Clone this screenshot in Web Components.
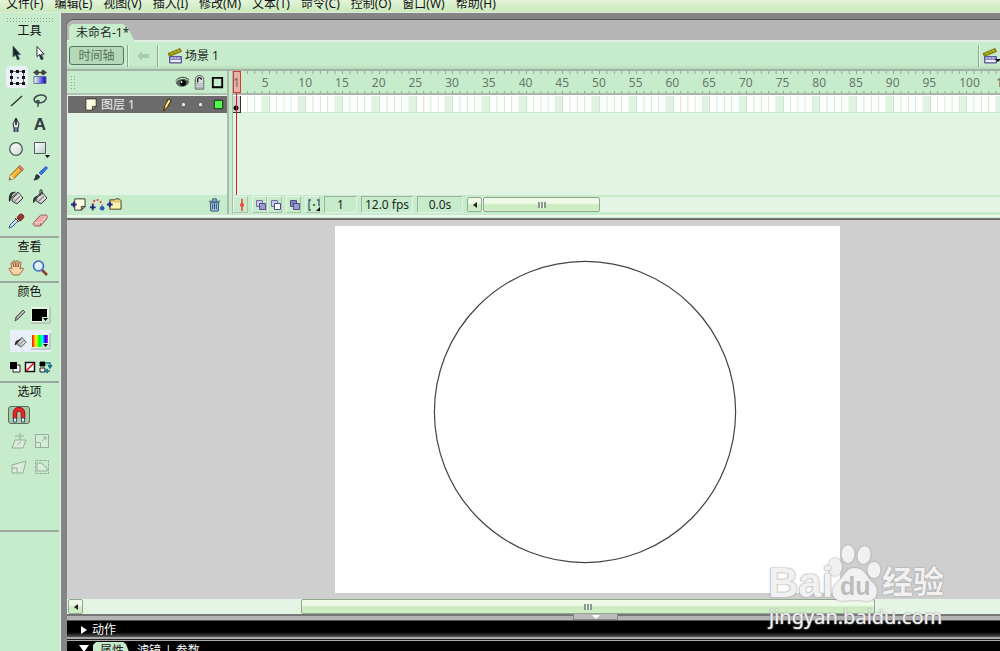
<!DOCTYPE html>
<html lang="zh-CN">
<head>
<meta charset="utf-8">
<title>未命名-1</title>
<style>
html,body{margin:0;height:100%;overflow:hidden}
body{font:12px/18px "Noto Sans","Noto Sans CJK SC",sans-serif;color:#1c281e;
--green:#c7eccb;--pale:#e2f4e4;--line:#a4b8a7;background:#858585}
</style>
</head>
<body>
<flash-app></flash-app>
<script>
const define=(name,css,html)=>customElements.define(name,class extends HTMLElement{
  connectedCallback(){
    if(this.shadowRoot)return;
    const body=typeof html==='function'?html(this):html;
    this.attachShadow({mode:'open'}).innerHTML=`<style>*{box-sizing:border-box}button{font:inherit;color:inherit;background:none;border:0;padding:0;margin:0}${css}</style>${body}`;
  }
});

const fold='<path d="M2 2h11v8l-4 4H2z" fill="#fffde2" stroke="#333"/><path d="M9 14v-4h4z" fill="#b5ae68" stroke="#333"/>';
const plus='<path d="M0 8h6M3 5v6" stroke="#24247c" stroke-width="2"/>';
const clap='<path d="M1 5.500 13 .5l1.500 3-12 5z" fill="#9c9410" stroke="#6b6708" stroke-width=".8"/><path d="m4 4.500 2 2m1-4 2 2m1-3 2 2" stroke="#d8d45a"/><path d="M2.500 8.500h12v6.500h-12z" fill="#8c88c8" stroke="#5b5798"/><path d="M4 10h9" stroke="#dcdcf8" stroke-dasharray="2 1"/><path d="M3.500 12h10v2h-10z" fill="#eef"/>';
const bucket='<path d="m4 8 6-5 5 6-6 6-5-3z" fill="#bbb" stroke="#444"/><path d="m6 9 5-4 3 4-5 4z" fill="#e4e4e4"/><path d="m7 12 5-5" stroke="#888" stroke-width="1.500"/><path d="M5 9 9 5" stroke="#555"/>';
const sq=(x,y,f,s)=>`<path d="M${x}.5 ${y}.5h6v6h-6z" fill="${f}" stroke="${s}"/>`;
const icons={
 arrow:'<path d="M5 1v11l2.500-2 2 5 2-1-2-4.500h3z" fill="#18242e" stroke="#4d6060" stroke-width=".8"/>',
 subarrow:'<path d="M5 1.500v10l2.500-2 2 5 1.700-.8-2-4.500h3z" fill="#fff" stroke="#27333c"/><path d="m8 10 2 4.500" stroke="#27333c" stroke-width="2"/>',
 transform:'<path d="M2.500 2.500h12v12h-12z" fill="none" stroke="#666"/><g fill="#111"><path d="M1 1h3v3H1zm12 0h3v3h-3zM1 13h3v3H1zm12 0h3v3h-3zM7 1h3v3H7zm0 12h3v3H7zM1 7h3v3H1zm12 0h3v3h-3zM8 8h1.500v1.500H8z"/></g>',
 gradient:'<defs><linearGradient id="g"><stop stop-color="#fff"/><stop offset="1" stop-color="#0000b8"/></linearGradient></defs><path d="M2 7.500h12v7H2z" fill="url(#g)" stroke="#6470a0"/><path d="M2 3.500h12" stroke="#444"/><path d="m1 3.500 4-3v6zM15 3.500l-4-3v6zM8 3.500l-3-3v6zM8 3.500l3-3v6z" fill="#444"/>',
 line:'<path d="M3 13 14 3" stroke="#333" stroke-width="1.400"/>',
 lasso:'<path d="M6 10C1 9 1 5 5 3c4-2 10-1 9 3-1 3-6 5-9 3-1-1 1-2 2-1 1 2-2 3-1 6" fill="none" stroke="#3e4a50" stroke-width="1.500"/>',
 pen:'<path d="M8 1 5 7l1 4h4l1-4z" fill="#dfe8f2" stroke="#222"/><path d="M8 2v6" stroke="#111" stroke-width="1.500"/><path d="M5.500 11h5v4h-5z" fill="#3b3f69"/><path d="M8 11v4" stroke="#bbd"/>',
 oval:'<defs><linearGradient id="o" x2="1" y2="1"><stop stop-color="#fff"/><stop offset="1" stop-color="#cbdcd5"/></linearGradient></defs><circle cx="8" cy="8" r="6.300" fill="url(#o)" stroke="#555d60" stroke-width="1.300"/>',
 rect:'<defs><linearGradient id="r" x2="1" y2="1"><stop stop-color="#fff"/><stop offset="1" stop-color="#bad1c9"/></linearGradient></defs><path d="M2.500 1.500h11v11h-11z" fill="url(#r)" stroke="#555d60"/><path d="M13 14h5l-2.500 3z" fill="#000"/>',
 pencil:'<path d="m1 15 1.500-5 8-8 3.500 3.500-8 8z" fill="#f6ac24" stroke="#8b5b16"/><path d="m1 15 1.500-5L6 13.500z" fill="#f6e0b8"/><path d="m1 15 1-2 1 1z" fill="#222"/><path d="m4 11 7-7" stroke="#ffe08e"/><path d="m10 2 2-1.500L15.500 4 14 6z" fill="#f07a6a" stroke="#8c4444" stroke-width=".6"/>',
 brush:'<path d="m7 8 7-6.500 1.500 1.500L9 10z" fill="#3b7ce5" stroke="#1f4fc2"/><path d="M1 15c3-1 1-5 4-6l3 2c0 3-4 5-7 4z" fill="#293746"/><path d="m6 8 3 3" stroke="#d9e2ef" stroke-width="1.500"/>',
 ink:bucket+'<path d="M1 13c-1-8 2-11 7-10L5 5c-2 2-1 6-4 8z" fill="#333"/>',
 bucket:bucket+'<path d="M1 14c0-5 1-7 5-7-2 2-2 6-5 7z" fill="#333"/><path d="M8 7V1h2v5" fill="none" stroke="#333"/>',
 dropper:'<path d="m1 15 1-3 6-6 2 2-6 6z" fill="#c3dcfb" stroke="#456483"/><path d="m7 5 4 4M9 5c2-4 4-5 6-3s0 4-3 6z" stroke="#702222" fill="#9a3434"/>',
 eraser:'<path d="m1.500 10 6-7c1-1 2-1 7-1 1 1 1 2 0 4l-6 7h-6c-1-1-2-2-1-3z" fill="#f0aaa6" stroke="#94625e"/><path d="m3 9.500 6 .5 5-7" fill="none" stroke="#fbd9d5"/><path d="m9 10-1 3" stroke="#a66"/>',
 hand:'<path d="M5 15 1 9c0-2 2-1 3 0L3 4c0-2 2-2 2 0l1 3-1-5c0-2 2-2 2 0l1 5V2c0-2 2-2 2 0v5l1-4c0-2 2-2 2 0l-1 6 2-1c2 0 2 1 1 2l-4 5z" fill="#fbd5a4" stroke="#854e27" stroke-width=".8"/>',
 zoom:'<path d="m10 10 5 5" stroke="#8e3a27" stroke-width="2.500"/><circle cx="6.500" cy="6" r="5" fill="#d9efff" stroke="#3c63cf" stroke-width="1.600"/><path d="M4 5c1-2 3-2 4-1" fill="none" stroke="#fff"/>',
 stroke:'<path d="m3 14 1-4 7-7 2 2-7 7z" fill="#999" stroke="#555"/><path d="m5 11 7-7" stroke="#ccc"/>',
 fill:'<g transform="translate(2 2) scale(.8)">'+bucket+'<path d="M1 13c0-5 2-7 7-7L6 8c-2 1-2 4-5 5z" fill="#333"/></g>',
 blackwell:'<path d="M-1 0h19v16H-1z" fill="#eaf5ea"/><path d="M-1 16h19V0" fill="none" stroke="#93a796"/><path d="M0 2h15v12H0z"/><path d="M10 10h7v5h-7z" fill="#c7eccb"/><path d="M11 11h5l-2.500 3z"/>',
 rainwell:'<defs><linearGradient id="w"><stop stop-color="#f00"/><stop offset=".25" stop-color="#ff0"/><stop offset=".45" stop-color="#0f0"/><stop offset=".65" stop-color="#0ff"/><stop offset=".85" stop-color="#00f"/><stop offset="1" stop-color="#f0f"/></linearGradient></defs><path d="M-1 0h19v16H-1z" fill="#eaf5ea"/><path d="M-1 16h19V0" fill="none" stroke="#93a796"/><path d="M0 2h16v12H0z" fill="url(#w)"/><path d="M10 10h7v5h-7z" fill="#c7eccb"/><path d="M11 11h5l-2.500 3z"/>',
 bw:'<path d="M6 6h7v7H6z" fill="#fff" stroke="#222"/><path d="M3 3h7v7H3z"/>',
 none:'<path d="M3.500 3.500h9v9h-9z" fill="#fff" stroke="#111" stroke-width="1.500"/><path d="m4 12 8-8" stroke="#e00" stroke-width="1.500"/>',
 swap:'<path d="M3 3h5v4H3zM3 9h5v4H3z" fill="#eee" stroke="#222"/><path d="M3 3h5v4H3z"/><path d="M9 4h4v4m-2-2 2 3 2-3M13 12H9m2-2-3 2 3 2" fill="none" stroke="#16748a" stroke-width="1.400"/>',
 magnet:'<path d="M4 12V6c0-5 8-5 8 0v6" fill="none" stroke="#7f1111" stroke-width="4.500"/><path d="M4 12V6c0-5 8-5 8 0v6" fill="none" stroke="#ea2525" stroke-width="3"/><path d="M2.500 11h3v4h-3zm8 0h3v4h-3z" fill="#dce8ff" stroke="#456"/>',
 skew:'<path d="M4 7h11l-3 8H1z" fill="#d8eed9" stroke="#98ad9a"/><path d="M4 3h9m-4-3v7M6 12l4-3" stroke="#98ad9a"/>',
 scale:'<path d="M1.500 1.500h13v13h-13zM1.500 9.500h5v5" fill="#d2edd5" stroke="#98ad9a"/><path d="m8 8 4-4M9 4h3v3" fill="none" stroke="#98ad9a"/>',
 distort:'<path d="m1 6 14-4-3 12H1zM1 9h5v5" fill="#d8eed9" stroke="#98ad9a"/>',
 envelope:'<path d="M1.500 1.500h13v13h-13z" fill="none" stroke="#98ad9a" stroke-dasharray="3 1"/><path d="M3 12V4h4l6 5v3z" fill="#d8eed9" stroke="#98ad9a"/>',
 back:'<path d="m2 8 5-5v3h7v4H7v3z" fill="#aacbad"/>',
 clap,
 eye:'<path d="M1 9c3-5 10-5 14-1-4 6-10 6-14 1z" fill="#576159"/><circle cx="8.500" cy="8.500" r="3.200"/><path d="M1 6c4-5 10-4 14-1M1 8c4-4 10-4 14-1" fill="none" stroke="#333"/><circle cx="7" cy="7.500" r="1" fill="#fff"/>',
 lock:'<path d="M3.500 15V5c0-6 9-6 9 0v10z" fill="#d5dfdc" stroke="#555"/><path d="M6 8V5c0-3 4-3 4 0" fill="none" stroke="#222" stroke-width="1.500"/><path d="M4 9h8v5H4z" fill="#90a6b0"/><path d="M4 10.500h8M4 12.500h8" stroke="#e8ece7"/>',
 box:'<path d="M3 3h10v10H3z" fill="none" stroke="#000" stroke-width="2"/>',
 layer:fold,
 edit:'<path d="m5 15 1-5 4-8 3 2-4 7z" fill="#f2ba37" stroke="#29230f"/><path d="m7 10 4-6" stroke="#fff0a8" stroke-width="1.500"/>',
 green:'<path d="M3.500 3.500h9v9h-9z" fill="#53fa4a" stroke="#142b12"/>',
 addlayer:'<g transform="translate(2)">'+fold+'</g>'+plus,
 guide:'<path d="M4 9c0-8 8-8 10 0" fill="none" stroke="#f13232" stroke-width="2" stroke-dasharray="2 2"/><circle cx="14" cy="12" r="2.500" fill="#245abd"/><path d="M1 11h6M4 8v6" stroke="#24247c" stroke-width="2"/>',
 folder:'<path d="M3 5V3h5l1-1h4l2 2v9H3z" fill="#e7ce78" stroke="#4a4431"/><path d="M4 6h10v6H4z" fill="#fbf1b5"/>'+plus,
 trash:'<path d="M3.500 6h9l-.5 9H4zM2 4.500h12M6 4V2h4v2" fill="#a6c8dc" stroke="#284c79"/><path d="M6 7v6m2-6v6m2-6v6" stroke="#284c79"/>',
 center:'<path d="M8 2v12" stroke="#ee3828" stroke-width="1.500"/><circle cx="8" cy="8" r="2" fill="#f24235"/>',
 onion:sq(3,3,'#c9ccef','#7070a5')+sq(6,6,'#9b9ccb','#505086'),
 onion2:sq(3,3,'#c9ccef','#7070a5')+sq(6,6,'#f3f6ff','#505086'),
 onion3:sq(3,3,'#8181b7','#505086')+sq(6,6,'#9b9ccb','#505086'),
 marks:'<path d="M5 3H3v10h2m6-10h2v6" fill="none" stroke="#435b73" stroke-width="1.300"/><path d="M7 8h2" stroke="#333" stroke-width="1.500"/><path d="M14 10v4h-4z"/>'
};
define('ui-icon',':host{display:block;width:16px;height:16px;flex:none}svg{display:block;width:100%;height:100%;overflow:visible}',
 el=>`<svg viewBox="0 0 16 16" aria-hidden="true">${icons[el.getAttribute('name')]||''}</svg>`);

define('menu-bar',`:host{display:block;height:13px;overflow:hidden;background:linear-gradient(#e3f4d9,#c9e9bb);border-bottom:1px solid #dfe9dc}
nav{display:flex;gap:11px;padding-left:6px;margin-top:-5px;color:#111}button{white-space:nowrap;line-height:18px}`,
 '<nav>'+['文件(F)','编辑(E)','视图(V)','插入(I)','修改(M)','文本(T)','命令(C)','控制(O)','窗口(W)','帮助(H)'].map(t=>`<button>${t}</button>`).join('')+'</nav>');

define('tool-button',`:host{display:block}button{width:100%;height:24px;display:grid;place-items:center;font:bold 17px/24px "Liberation Sans",sans-serif;color:#333b3f}
:host([selected]) button{background:#eaf1fa;border-radius:4px;width:22px;height:22px;margin:1px auto 0 2px}
:host([pressed]) button{width:22px;height:18px;background:#a5c9a9;border:1px solid #566b59;border-radius:3px;margin:3px auto}`,
 el=>`<button aria-label="${el.getAttribute('icon')||'text'}">${el.hasAttribute('icon')?`<ui-icon name="${el.getAttribute('icon')}"></ui-icon>`:'<slot></slot>'}</button>`);

define('tool-section',`:host{display:block;border-bottom:2px solid #9ca99e;padding:0 4px 1px;width:59px}
h2{font:inherit;line-height:18px;margin:0;text-align:center;color:#111}`,
 el=>`<h2>${el.getAttribute('label')}</h2><slot></slot>`);

const tools=list=>list.map(n=>n==='text'?'<tool-button>A</tool-button>':`<tool-button icon="${n}"${n==='transform'?' selected':''}></tool-button>`).join('');
define('tool-box',`:host{display:block;background:var(--green);border-right:1px solid #e2eee3;padding-top:4px}
.grip{height:5px;margin:0 5px 0 6px;background:radial-gradient(circle,#86a58a 1px,transparent 1px) 0 0/3px 3px}
.grid{display:grid;grid-template-columns:24px 24px}.first{padding:1px 0 2px}
.colours{padding:2px 0 1px;display:grid;gap:2px}.well{display:grid;grid-template-columns:20px 20px;padding-left:6px}
.well.on{background:linear-gradient(#e6effa,#e6effa) 6px 1px/41px 22px no-repeat}
.three{display:grid;grid-template-columns:repeat(3,15px);padding-left:3px}
.options{padding:2px 0 50px;display:grid;grid-template-columns:22px 24px;row-gap:2px;padding-left:4px}.options :first-child{grid-column:1/3;width:22px}`,
`<div class="grip"></div><tool-section label="工具"><div class="grid first">${tools(['arrow','subarrow','transform','gradient','line','lasso','pen','text','oval','rect','pencil','brush','ink','bucket','dropper','eraser'])}</div></tool-section>
<tool-section label="查看"><div class="grid">${tools(['hand','zoom'])}</div></tool-section>
<tool-section label="颜色"><div class="colours"><div class="well">${tools(['stroke','blackwell'])}</div><div class="well on">${tools(['fill','rainwell'])}</div><div class="three">${tools(['bw','none','swap'])}</div></div></tool-section>
<tool-section label="选项"><div class="options"><tool-button icon="magnet" pressed></tool-button>${tools(['skew','scale','distort','envelope'])}</div></tool-section>`);

define('doc-tabs',`:host{display:block;height:22px;background:#b5b5b5;border-bottom:2px solid #e2eee3;border-radius:6px 0 0;padding:4px 0 0 2px;box-shadow:0 -1px #555,-1px 0 #777}
button{height:18px;width:66px;background:var(--green);clip-path:polygon(0 3px,3px 0,54px 0,59px 4px,66px 18px,0 18px);text-align:left;padding-left:7px;line-height:18px;white-space:nowrap}`,
'<button>未命名-1*</button>');

define('edit-bar',`:host{display:flex;align-items:center;height:29px;background:linear-gradient(var(--green) 85%,#b5d9b9);border-bottom:2px solid #a3b2a5;padding-left:2px;overflow:hidden}
.toggle{width:55px;height:19px;border:1px solid #587460;border-radius:3px;background:#b4d8b8;color:#56705b;line-height:16px}
i{width:2px;height:22px;background:linear-gradient(90deg,#8fa693 50%,#e3f6e5 50%);margin:0 3px;flex:none}
.back{margin:0 3px}.scene{display:flex;align-items:center;gap:2px;margin-left:5px}.end{margin-left:auto;display:flex;align-items:center;width:22px}.end i{margin:0 2px 0 0}.end button{display:flex;align-items:end}.tri{border:3px solid transparent;border-top-color:#111;border-bottom:0;margin:0 0 2px -3px}`,
`<button class="toggle">时间轴</button><i></i><button class="back" aria-label="back"><ui-icon name="back"></ui-icon></button><i></i><div class="scene"><ui-icon name="clap"></ui-icon><span>场景 1</span></div><div class="end"><i></i><button aria-label="scenes"><ui-icon name="clap"></ui-icon><span class="tri"></span></button></div>`);

define('layer-list',`:host{display:grid;grid-template-rows:24px 18px 1fr 19px;background:var(--pale);border-right:2px solid #a9bcab}
.head,.row{display:grid;grid-template-columns:1fr 18px 17px 18px;align-items:center;justify-items:center;padding-right:1px}
.head{background:var(--green);border-bottom:2px solid #b2c3b4}
.grip{justify-self:start;width:5px;height:15px;margin-left:3px;background:radial-gradient(circle,#86a58a 1px,transparent 1px) 0 0/3px 3px}
.row{background:#6b6b6b;color:#eee;margin:1px 0 0 1px;padding-right:0}.name{justify-self:stretch;display:flex;align-items:center;padding-left:16px;line-height:17px}
.name span{padding-left:2px;flex:1}.dot{width:3px;height:3px;border-radius:50%;background:#fff}
ui-icon{width:15px;height:15px}
.foot{display:flex;align-items:center;gap:3px;background:var(--green);padding:0 5px 0 4px}.foot :last-child{margin-left:auto}`,
`<div class="head"><span class="grip"></span><ui-icon name="eye"></ui-icon><ui-icon name="lock"></ui-icon><ui-icon name="box"></ui-icon></div>
<div class="row"><div class="name"><ui-icon name="layer"></ui-icon><span>图层 1</span><ui-icon name="edit"></ui-icon></div><b class="dot"></b><b class="dot"></b><ui-icon name="green"></ui-icon></div><div></div>
<div class="foot">${['addlayer','guide','folder','trash'].map(n=>`<button aria-label="${n}"><ui-icon name="${n}"></ui-icon></button>`).join('')}</div>`);

define('scroll-bar',`:host{display:flex;height:15px;background:#e4f4e5}
button{height:15px;border:1px solid #8fa991;border-radius:2px;background:linear-gradient(#eef9e8 40%,#c9eabd 55%,#d2efc8);flex:none;display:grid;place-items:center}
.step{width:15px}.step::before{content:"";border:3px solid transparent;border-right:4px solid #222;border-left:0}
.thumb{width:var(--thumb);margin-left:var(--start)}.thumb::before{content:"";width:8px;height:6px;background:repeating-linear-gradient(90deg,#8b988c 0 2px,#f4faf2 2px 3px)}`,
'<button class="step" aria-label="scroll left"></button><button class="thumb" aria-label="scroll thumb"></button>');

define('frame-grid',`:host{display:grid;grid-template-rows:24px 18px 1fr 19px;background:var(--pale);min-width:0;position:relative;overflow:hidden;border-left:1px solid #a9bcab}
.ruler,.cells{display:grid;grid-template-columns:repeat(21,1fr);width:calc(100% + 4px)}
.ruler{background:var(--green);border-bottom:2px solid #a8b5a9;color:#68786b}
.ruler div{background:linear-gradient(90deg,transparent calc(100% - 1px),#91a394 0) 0 0/20% 3px repeat-x,linear-gradient(90deg,transparent calc(100% - 1px),#91a394 0) 0 100%/20% 3px repeat-x;white-space:nowrap;padding-left:78%;line-height:23px;min-width:0}
.cells{height:18px;border-bottom:1px solid #c9e9cc;border-top:1px solid #fff}.cells div{background:linear-gradient(90deg,transparent calc(100% - 1px),#c9ebcd 0) 0 0/20% 100%,linear-gradient(90deg,#fff 80%,#e0f2e2 0)}
.head{position:absolute;left:0;top:0;width:8px;height:22px;background:#ff8c8c99;border:1px solid #d43a3a;z-index:1}
.first{position:absolute;left:0;top:0;line-height:23px;color:#8a5555;z-index:2}
.line{position:absolute;left:3px;top:22px;width:1px;bottom:19px;background:#d42222}
.key{position:absolute;left:0;top:25px;width:8px;height:17px;border-right:1px solid #333;border-bottom:1px solid #333;background:radial-gradient(circle at 3px 12px,#000 2px,transparent 3px),#d5d5d5}
.foot{display:flex;align-items:center;background:var(--green);min-width:0}
.btn{width:15px;height:17px;border:1px solid #aebfae;border-left-color:#e6f6e8;border-top-color:#e6f6e8;display:grid;place-items:center;flex:none}
.gap{margin-left:4px}output{height:17px;line-height:16px;text-align:center;border:1px solid #e5f3e6;border-top-color:#9db3a0;border-left-color:#9db3a0;margin-left:4px;flex:none}
.a{width:33px}.b{width:52px}.c{width:46px}scroll-bar{flex:1;margin-left:4px;--thumb:117px;--start:1px}`,
`<div class="ruler">${Array.from({length:21},(_,i)=>`<div>${(i+1)*5}</div>`).join('')}</div><div class="cells">${'<div></div>'.repeat(21)}</div><div></div>
<div class="foot"><button class="btn" aria-label="center frame"><ui-icon name="center"></ui-icon></button><button class="btn gap" aria-label="onion skin"><ui-icon name="onion"></ui-icon></button><button class="btn" aria-label="onion outlines"><ui-icon name="onion2"></ui-icon></button><button class="btn gap" aria-label="edit frames"><ui-icon name="onion3"></ui-icon></button><button class="btn gap" aria-label="markers"><ui-icon name="marks"></ui-icon></button>
<output class="a">1</output><output class="b">12.0 fps</output><output class="c">0.0s</output><scroll-bar></scroll-bar></div>
<div class="key"></div><div class="line"></div><div class="head"></div><span class="first">1</span>`);

define('time-line',`:host{display:grid;grid-template-columns:162px 1fr;grid-template-rows:1fr 3px;column-gap:3px;height:148px;background:var(--green);padding-bottom:1px;border-bottom:1px solid #777}
:host::after{content:"";grid-column:1/3;background:linear-gradient(var(--green) 1px,#edf9ee 1px)}`,
'<layer-list></layer-list><frame-grid></frame-grid>');

define('stage-area',`:host{display:flex;flex-direction:column;background:#cfcfcf;min-height:0;border-top:1px solid #666}
.view{flex:1;display:flex;justify-content:center;padding:6px 0 6px 108px;min-height:0}
.paper{width:505px;background:#fff;height:100%}svg{display:block;width:100%;height:100%}
scroll-bar{--thumb:574px;--start:218px;padding-left:1px}`,
`<div class="view"><div class="paper"><svg viewBox="0 0 505 368"><circle cx="250" cy="186.500" r="151" fill="none" stroke="#444" stroke-width="1.200"/></svg></div></div><scroll-bar></scroll-bar>`);

define('dock-panels',`:host{display:block;color:#fff}
.split{height:7px;background:linear-gradient(#777 0 2px,#b4b4b4 2px 6px,#555 6px);padding-left:506px}
.split button{display:grid;place-items:center;width:45px;height:6px;background:#bbb;border:1px solid #888;border-top:0}.split button::before{content:"";border:4px solid transparent;border-top:4px solid #fff;border-bottom:0}
.panel{height:16px;display:flex;align-items:center;background:linear-gradient(#000 70%,#555);padding:1px 0 0 14px;gap:5px}
.tri{border:4px solid transparent;border-left:6px solid #fff;border-right:0}.open{border:5px solid transparent;border-top:7px solid #fff;border-bottom:0}
.edge{height:4px;background:linear-gradient(#a9a9a9 0 2px,#222 2px 3px,#aaa 3px)}
.tabs{height:10px;background:#000;display:flex;overflow:hidden;padding-left:12px}.tabs .open{margin-top:4px}.tabs button{height:18px;line-height:18px}
.tabs .on{color:#222;background:var(--green);width:36px;margin-left:4px;padding-left:7px;text-align:left;clip-path:polygon(0 3px,3px 0,30px 0,33px 2px,36px 10px,36px 18px,0 18px);margin-top:1px}.plain{display:flex;gap:4px;margin:1px 0 0 8px}`,
`<div class="split"><button aria-label="collapse"></button></div><div class="panel"><span class="tri"></span><span>动作</span></div><div class="edge"></div>
<div class="tabs"><span class="open"></span><button class="on">属性</button><div class="plain"><button>滤镜</button><span>|</span><button>参数</button></div></div>`);

define('water-mark',`:host{position:absolute;right:54px;bottom:20px;width:178px;height:88px;color:#f1f1f1;pointer-events:none;text-shadow:0 0 2px #999,0 0 1px #999;white-space:nowrap}
svg{position:absolute;left:60px;top:1px;width:54px;height:60px;overflow:visible;filter:drop-shadow(0 0 1px #999)}
.bai,.du,.jy,.url{position:absolute}
.bai{left:0;top:19px;font:bold 42px/42px "Liberation Sans",sans-serif}.du{left:72px;top:29px;font:bold 25px/28px "Liberation Sans",sans-serif;color:#bcbcbc;text-shadow:none}
.jy{left:114px;top:18px;font:bold 31px/38px "Noto Sans CJK SC",sans-serif}.url{left:1px;top:60px;font:20px/28px "Noto Sans",sans-serif}`,
`<svg viewBox="0 0 54 60"><g fill="#f1f1f1"><ellipse cx="7" cy="23" rx="7" ry="9"/><ellipse cx="20" cy="10" rx="6.500" ry="9"/><ellipse cx="36" cy="11" rx="6.500" ry="9" transform="rotate(10 36 11)"/><ellipse cx="46" cy="26" rx="6.500" ry="8"/><path d="M27 24c10 0 11 9 18 15s4 18-5 18c-6 0-8-1-13-1s-8 1-13 1c-9 0-13-11-5-18s8-15 18-15z"/></g></svg>
<span class="bai">Bai</span><span class="du">du</span><span class="jy">经验</span><span class="url">jingyan.baidu.com</span>`);

define('flash-app',`:host{display:grid;grid-template-rows:auto 1fr;height:100vh;position:relative;overflow:hidden}
.work{display:grid;grid-template-columns:61px 1fr;min-height:0}
main{margin-left:6px;padding-top:7px;display:grid;grid-template-rows:auto auto auto 1fr auto;min-width:0;min-height:0}`,
`<menu-bar></menu-bar><div class="work"><tool-box></tool-box><main><doc-tabs></doc-tabs><edit-bar></edit-bar><time-line></time-line><stage-area></stage-area><dock-panels></dock-panels></main></div><water-mark></water-mark>`);
</script>
</body>
</html>
